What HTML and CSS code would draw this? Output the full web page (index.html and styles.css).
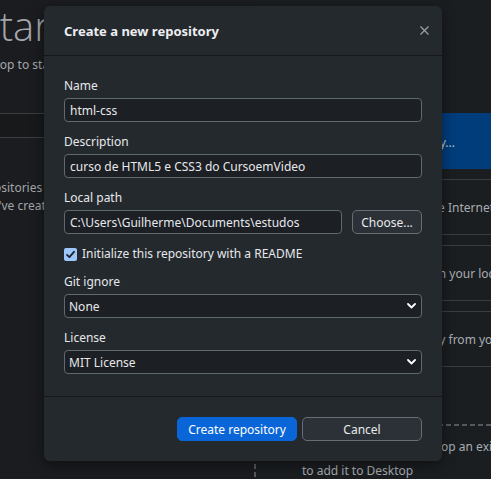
FILE: index.html
```html
<!DOCTYPE html>
<html lang="en">
<head>
<meta charset="utf-8">
<title>Create a new repository</title>
<link rel="stylesheet" href="styles.css">
</head>
<body>
<div class="app">
  <div class="pane-left">
    <h1 class="welcome-title">Let's get started!</h1>
    <p class="welcome-sub">Add a repository to GitHub Desktop to start collaborating</p>
    <div class="band"></div>
    <p class="empty empty-1">Looks like you don't have any repositories</p>
    <p class="empty empty-2">Repositories that you've created will appear here</p>
  </div>
  <div class="pane-right">
    <div class="actions">
      <div class="action primary"><span>Create a tutorial repository...</span></div>
      <div class="action"><span>Clone a repository from the Internet...</span></div>
      <div class="action"><span>Create a New Repository on your local drive...</span></div>
      <div class="action action-add"><span>Add an Existing Repository from your local drive...</span></div>
    </div>
    <div class="protip">
      <div class="protip-1">ProTip! You can drag &amp; drop an existing repository folder here</div>
      <div>to add it to Desktop</div>
    </div>
  </div>
</div>

<div class="modal">
  <div class="modal-header">
    <h2 class="modal-title">Create a new repository</h2>
    <svg class="close" width="9" height="9" viewBox="0 0 9 9"><path d="M0.5 0.5L8.5 8.5M8.5 0.5L0.5 8.5" stroke="#9ba1a7" stroke-width="1.2" fill="none"/></svg>
  </div>
  <div class="modal-body">
    <div class="field">
      <label class="label">Name</label>
      <input class="text-input" type="text" value="html-css">
    </div>
    <div class="field">
      <label class="label">Description</label>
      <input class="text-input" type="text" value="curso de HTML5 e CSS3 do CursoemVideo">
    </div>
    <div class="field">
      <label class="label">Local path</label>
      <div class="path-row">
        <input class="text-input path" type="text" value="C:\Users\Guilherme\Documents\estudos">
        <button class="btn choose">Choose...</button>
      </div>
    </div>
    <div class="check-row">
      <span class="checkbox"><svg width="13" height="13" viewBox="0 0 13 13"><path d="M3 6.8L5.4 9.2L10 3.8" stroke="#1f2328" stroke-width="1.8" fill="none" stroke-linecap="round" stroke-linejoin="round"/></svg></span>
      <span>Initialize this repository with a README</span>
    </div>
    <div class="field">
      <label class="label">Git ignore</label>
      <div class="select-wrap">
        <select class="select"><option>None</option></select>
        <svg class="chevron" width="9" height="6" viewBox="0 0 9 6"><path d="M1 1L4.5 4.5L8 1" stroke="#ffffff" stroke-width="1.8" fill="none" stroke-linecap="round" stroke-linejoin="round"/></svg>
      </div>
    </div>
    <div class="field">
      <label class="label">License</label>
      <div class="select-wrap">
        <select class="select"><option>MIT License</option></select>
        <svg class="chevron" width="9" height="6" viewBox="0 0 9 6"><path d="M1 1L4.5 4.5L8 1" stroke="#ffffff" stroke-width="1.8" fill="none" stroke-linecap="round" stroke-linejoin="round"/></svg>
      </div>
    </div>
  </div>
  <div class="modal-footer">
    <button class="btn primary-btn">Create repository</button>
    <button class="btn">Cancel</button>
  </div>
</div>
</body>
</html>
```

FILE: styles.css
```css
html, body {
  margin: 0;
  padding: 0;
}
body {
  width: 491px;
  height: 479px;
  overflow: hidden;
  position: relative;
  background: #1a1c1f;
  font-family: "Noto Sans", "Open Sans", sans-serif;
  font-size: 12px;
}
.app {
  display: flex;
  height: 479px;
  overflow: hidden;
}
.pane-left {
  width: 254px;
  flex: none;
  background: #1a1c1f;
  overflow: hidden;
}
.welcome-title {
  margin: 0 0 0 -178px;
  font-family: "Open Sans", "Noto Sans", sans-serif;
  font-weight: 300;
  font-size: 40px;
  line-height: 52px;
  color: #a3a6aa;
  white-space: nowrap;
}
.welcome-sub {
  margin: 5px 0 0 -186px;
  line-height: 16px;
  color: #a5a8ac;
  white-space: nowrap;
}
.band {
  margin-top: 40px;
  height: 23px;
  border-top: 1px solid #3a3e43;
  border-bottom: 1px solid #3a3e43;
  background: #17191b;
}
.empty {
  margin: 0;
  line-height: 18px;
  color: #a2a6aa;
  white-space: nowrap;
}
.empty-1 {
  margin-top: 41px;
  margin-left: -193px;
}
.empty-2 {
  margin-left: -121px;
}
.pane-right {
  flex: none;
  width: 420px;
  padding-top: 113px;
  background: #1b1e21;
  overflow: hidden;
}
.actions {
  display: flex;
  flex-direction: column;
  gap: 10px;
}
.action {
  height: 54px;
  display: flex;
  align-items: center;
  padding-left: 36px;
  border-top: 1px solid #3a3e43;
  border-bottom: 1px solid #3a3e43;
  color: #a9adb1;
  white-space: nowrap;
}
.action.primary {
  background: #013c7b;
  border-color: #013c7b;
  color: #bcc6d2;
  padding-top: 3px;
  padding-left: 40px;
  height: 51px;
}
.action.action-add {
  padding-left: 41px;
}
.protip {
  margin-top: 57px;
  padding: 11px 0 0 48px;
  height: 80px;
  line-height: 24px;
  color: #a9adb1;
  white-space: nowrap;
  background:
    repeating-linear-gradient(to right, #55595f 0 5px, transparent 5px 8px) left top / 100% 2px no-repeat,
    repeating-linear-gradient(to bottom, #55595f 0 5px, transparent 5px 8px) left top / 2px 100% no-repeat;
}
.protip-1 {
  margin-left: -4px;
}

/* modal */
.modal {
  position: absolute;
  left: 44px;
  top: 6px;
  width: 398px;
  background: #24292e;
  border-radius: 6px;
  box-shadow: 0 4px 14px rgba(0, 0, 0, 0.45);
  color: #e6e8eb;
}
.modal-header {
  height: 49px;
  display: flex;
  align-items: center;
  justify-content: space-between;
  padding: 0 13px 0 20px;
  border-bottom: 1px solid #16181b;
}
.modal-title {
  margin: 0;
  font-size: 13px;
  font-weight: 700;
  color: #eceef0;
}
.close {
  display: block;
}
.modal-body {
  padding: 22px 20px 22px;
  display: flex;
  flex-direction: column;
  gap: 12px;
}
.field {
  display: flex;
  flex-direction: column;
  gap: 4px;
}
.label {
  line-height: 16px;
  color: #e6e8eb;
}
.text-input, .select {
  box-sizing: border-box;
  height: 24px;
  width: 100%;
  margin: 0;
  padding: 0 5px;
  border: 1px solid #62686f;
  border-radius: 4px;
  background: #1c1f23;
  color: #e6e8eb;
  font: inherit;
  outline: none;
}
.path-row {
  display: flex;
  gap: 10px;
}
.text-input.path {
  flex: 1;
  width: auto;
  min-width: 0;
}
.select {
  appearance: none;
  -webkit-appearance: none;
  padding: 0 4px;
}
.select-wrap {
  position: relative;
}
.chevron {
  position: absolute;
  right: 6px;
  top: 9px;
}
.check-row {
  display: flex;
  align-items: center;
  gap: 5px;
  height: 16px;
  line-height: 16px;
}
.checkbox {
  width: 13px;
  height: 13px;
  border-radius: 2px;
  background: #9dc6fb;
  display: block;
}
.checkbox svg {
  display: block;
}
.btn {
  box-sizing: border-box;
  height: 24px;
  margin: 0;
  padding: 0 8px;
  border: 1px solid #676d75;
  border-radius: 5px;
  background: #2c3137;
  color: #e8eaed;
  font: inherit;
}
.choose {
  width: 70px;
  flex: none;
}
.modal-footer {
  border-top: 1px solid #16181b;
  padding: 20px;
  display: flex;
  justify-content: flex-end;
  gap: 5px;
}
.modal-footer .btn {
  width: 120px;
}
.primary-btn {
  background: #0a66d8;
  border-color: #0a66d8;
  color: #ffffff;
}
```
